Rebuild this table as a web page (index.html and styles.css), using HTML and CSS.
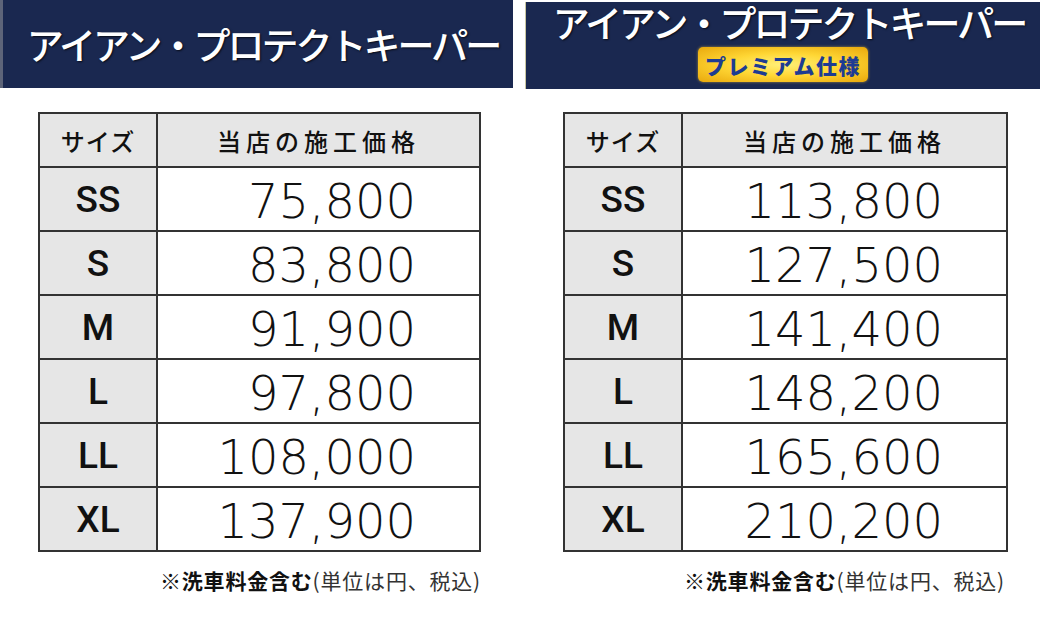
FILE: index.html
```html
<!DOCTYPE html>
<html lang="ja">
<head>
<meta charset="utf-8">
<title>アイアン・プロテクトキーパー 価格表</title>
<link rel="stylesheet" href="styles.css">
</head>
<body>
<div class="page">
  <section class="col col-left">
    <header class="banner banner-left">
      <h1 class="title">アイアン・プロテクトキーパー</h1>
    </header>
    <div class="sheet sheet-left">
      <table class="price">
        <colgroup><col class="c-size"><col class="c-price"></colgroup>
        <thead>
          <tr class="head"><th class="h-size">サイズ</th><th class="h-price">当店の施工価格</th></tr>
        </thead>
        <tbody>
          <tr><td class="size">SS</td><td class="amt">75,800</td></tr>
          <tr><td class="size">S</td><td class="amt">83,800</td></tr>
          <tr><td class="size">M</td><td class="amt">91,900</td></tr>
          <tr><td class="size">L</td><td class="amt">97,800</td></tr>
          <tr><td class="size">LL</td><td class="amt">108,000</td></tr>
          <tr><td class="size">XL</td><td class="amt">137,900</td></tr>
        </tbody>
      </table>
      <p class="note"><b>※洗車料金含む</b>(単位は円、税込)</p>
    </div>
  </section>
  <section class="col col-right">
    <header class="banner banner-right">
      <h1 class="title">アイアン・プロテクトキーパー</h1>
      <span class="badge">プレミアム仕様</span>
    </header>
    <div class="sheet sheet-right">
      <table class="price">
        <colgroup><col class="c-size"><col class="c-price"></colgroup>
        <thead>
          <tr class="head"><th class="h-size">サイズ</th><th class="h-price">当店の施工価格</th></tr>
        </thead>
        <tbody>
          <tr><td class="size">SS</td><td class="amt">113,800</td></tr>
          <tr><td class="size">S</td><td class="amt">127,500</td></tr>
          <tr><td class="size">M</td><td class="amt">141,400</td></tr>
          <tr><td class="size">L</td><td class="amt">148,200</td></tr>
          <tr><td class="size">LL</td><td class="amt">165,600</td></tr>
          <tr><td class="size">XL</td><td class="amt">210,200</td></tr>
        </tbody>
      </table>
      <p class="note"><b>※洗車料金含む</b>(単位は円、税込)</p>
    </div>
  </section>
</div>
</body>
</html>
```
FILE: styles.css
```css
html, body {
  margin: 0;
  padding: 0;
  background: #ffffff;
}
body {
  font-family: "Noto Sans CJK JP", "Noto Sans", sans-serif;
  color: #111;
}
.page {
  display: flex;
  gap: 12px;
}
.col-left { width: 513px; }
.col-right { width: 515px; }

.banner {
  background: #1a2850;
  box-sizing: border-box;
  display: flex;
  align-items: center;
}
.banner-left {
  height: 88px;
  justify-content: center;
  padding-left: 10px;
  border-left: 3px solid #5d6479;
}
.banner-right {
  margin-top: 2px;
  height: 87px;
  flex-direction: column;
  border-left: 1px solid #c9c6a0;
}
.title {
  margin: 0;
  color: #ffffff;
  font-size: 37px;
  font-weight: 500;
  letter-spacing: -3px;
  line-height: 46px;
  white-space: nowrap;
  text-shadow: 1px 1px 2px rgba(0, 0, 0, 0.7);
}
.banner-right .title {
  line-height: 42px;
  margin-top: -1px;
  padding-left: 12px;
}
.badge {
  margin-top: 4px;
  height: 35px;
  box-sizing: border-box;
  padding: 0 7px;
  display: flex;
  align-items: center;
  border-radius: 5px;
  background: radial-gradient(ellipse at center, #fff07a 0%, #ffd735 45%, #e9a80c 100%);
  box-shadow: 0 0 3px rgba(255, 210, 60, 0.6);
  color: #1d3c92;
  font-size: 21px;
  font-weight: 900;
  letter-spacing: 1.5px;
  white-space: nowrap;
}

.sheet {
  margin-left: 38px;
}
.sheet-left {
  margin-top: 24px;
  width: 443px;
}
.sheet-right {
  margin-top: 23px;
  width: 445px;
}
.price {
  width: 100%;
  border-collapse: collapse;
  table-layout: fixed;
}
.c-size { width: 118px; }
.price th,
.price td {
  border: 2px solid #333;
  padding: 0;
}
.head {
  height: 54px;
}
.price th {
  background: #e6e6e6;
  font-size: 24px;
  font-weight: 500;
  color: #111;
}
.h-size { letter-spacing: 1px; }
.h-price { letter-spacing: 5px; padding-left: 5px; }
.price tbody tr {
  height: 64px;
}
.size {
  background: #e6e6e6;
  text-align: center;
  font-family: Roboto, "Liberation Sans", sans-serif;
  font-weight: 500;
  font-size: 37px;
  color: #111;
}
.amt {
  background: #ffffff;
  text-align: right;
  padding-right: 63px !important;
  font-family: "DejaVu Sans", sans-serif;
  font-weight: 200;
  font-size: 48px;
  color: #111;
  padding-top: 4px !important;
}
.note {
  margin: 14px 0 0;
  text-align: right;
  font-size: 21px;
  letter-spacing: 0.8px;
  line-height: 28px;
  color: #333;
  white-space: nowrap;
}
.sheet-right .note {
  padding-right: 3px;
}
.note b {
  color: #111;
  font-weight: 700;
}
```
